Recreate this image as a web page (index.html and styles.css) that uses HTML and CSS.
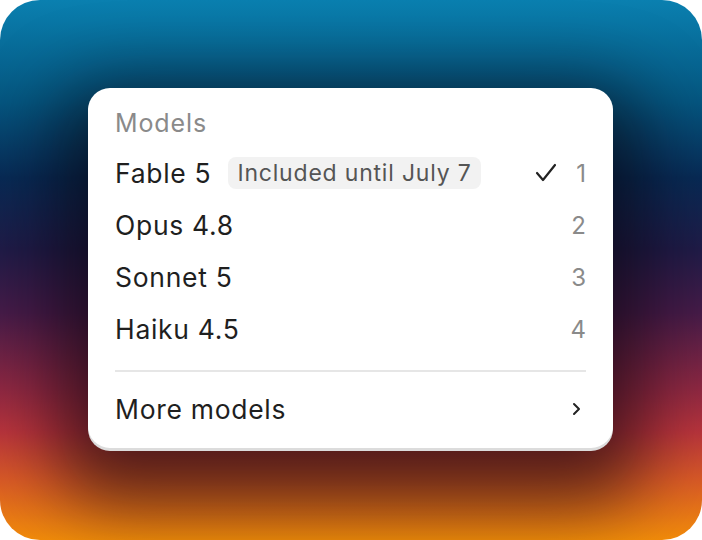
FILE: index.html
```html
<!DOCTYPE html>
<html>
<head>
<meta charset="utf-8">
<link rel="stylesheet" href="styles.css">
</head>
<body>
<div class="stage">
  <div class="menu">
    <div class="heading">Models</div>
    <div class="item">
      <span class="name">Fable 5</span>
      <span class="badge">Included until July 7</span>
      <span class="spacer"></span>
      <svg class="check" width="22" height="22" viewBox="0 0 22 22"><polyline points="2,11 8,18 20,3" fill="none" stroke="#222" stroke-width="2.2" stroke-linecap="round" stroke-linejoin="round"/></svg>
      <span class="num">1</span>
    </div>
    <div class="item">
      <span class="name">Opus 4.8</span>
      <span class="spacer"></span>
      <span class="num">2</span>
    </div>
    <div class="item">
      <span class="name">Sonnet 5</span>
      <span class="spacer"></span>
      <span class="num">3</span>
    </div>
    <div class="item">
      <span class="name">Haiku 4.5</span>
      <span class="spacer"></span>
      <span class="num">4</span>
    </div>
    <div class="sep"></div>
    <div class="item more">
      <span class="name">More models</span>
      <span class="spacer"></span>
      <svg class="chev" width="10" height="14" viewBox="0 0 10 14"><polyline points="3,2 8,7 3,12" fill="none" stroke="#222" stroke-width="2" stroke-linecap="round" stroke-linejoin="round"/></svg>
    </div>
  </div>
</div>
</body>
</html>
```

FILE: styles.css
```css
html, body {
  margin: 0;
  padding: 0;
  background: #ffffff;
}
.stage {
  width: 702px;
  height: 540px;
  border-radius: 40px;
  overflow: hidden;
  background: linear-gradient(to bottom,
    #0a80b0 0%,
    #05557f 19%,
    #082a55 33%,
    #1f1b47 46%,
    #461b48 58%,
    #8e2842 72%,
    #b8343c 80%,
    #d85a26 89%,
    #f28c0a 100%);
  box-sizing: border-box;
  padding: 88px 89px 0 88px;
  font-family: "Inter", "Noto Sans", sans-serif;
}
.menu {
  width: 525px;
  box-sizing: border-box;
  background: #ffffff;
  border-radius: 22px;
  padding: 11px 27px 13px 27px;
  box-shadow: 0 3px 0 #dcdcdc, 0 26px 70px 30px rgba(8, 4, 10, 0.6);
  display: flex;
  flex-direction: column;
}
.heading {
  height: 48px;
  line-height: 48px;
  font-size: 25px;
  letter-spacing: 0.9px;
  color: #8a8a8a;
}
.item {
  height: 52px;
  display: flex;
  align-items: center;
  font-size: 26.5px;
  letter-spacing: 0.7px;
  color: #1f1f1f;
}
.name {
  white-space: nowrap;
}
.badge {
  margin-left: 17px;
  background: #f2f2f2;
  color: #555555;
  font-size: 23px;
  letter-spacing: 0.8px;
  border-radius: 8px;
  padding: 0 9px 0 9px;
  height: 32px;
  line-height: 32px;
  white-space: nowrap;
}
.spacer {
  flex: 1;
}
.check {
  margin-right: 19px;
}
.num {
  color: #8a8a8a;
  font-size: 24px;
  letter-spacing: 0;
}
.sep {
  height: 2px;
  background: #e6e6e6;
  margin: 15px 0 11px 0;
}
.chev {
  margin-right: 5px;
}
```
